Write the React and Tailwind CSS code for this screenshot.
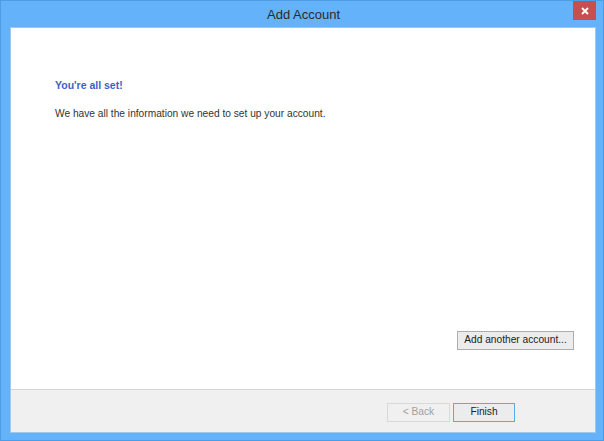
const App = () => {
    const font = { fontFamily: '"Liberation Sans", Arial, sans-serif' };
    return (
        <div className="w-[604px] h-[441px] bg-[#63b2fa] flex flex-col border border-[#4c9de6]" style={font}>
            {/* title bar */}
            <div className="h-[26px] flex items-start relative shrink-0">
                <div className="flex-1 text-center text-[13px] leading-[27px] text-[#2b2b2b] pl-[3px]">Add Account</div>
                <div className="absolute right-[7px] top-0 w-[23px] h-[19px] bg-[#c7504f] flex items-center justify-center">
                    <svg width="8" height="8" viewBox="0 0 8 8">
                        <path d="M1 1L7 7M7 1L1 7" stroke="#fff" strokeWidth="1.8" />
                    </svg>
                </div>
            </div>

            <div className="flex-1 flex flex-col ml-[9px] mr-[7px] mb-[7px] border border-[#9fc8ee]">
                <div className="flex-1 bg-white flex flex-col pl-[44px] pr-[21px]">
                    <div className="pt-[49px] text-[10.5px] font-bold text-[#3a62c9] leading-4">You're all set!</div>
                    <div className="pt-[13px] text-[10.2px] text-[#333] leading-4">We have all the information we need to set up your account.</div>
                    <div className="flex-1" />
                    <div className="flex justify-end pb-[39px]">
                        <button className="h-[19px] w-[117px] bg-[#ececec] border border-[#adadad] text-[10.2px] text-[#222] leading-none whitespace-nowrap">Add another account...</button>
                    </div>
                </div>
                <div className="h-[43px] bg-[#f0f0f0] border-t border-[#d6d6d6] flex justify-end items-start pt-[13px] pr-[80px] gap-[3px] shrink-0">
                    <button className="h-[19px] w-[63px] bg-[#f0f0f0] border border-[#d9d9d9] text-[10.2px] text-[#a0a0a0] leading-none">&lt; Back</button>
                    <button className="h-[19px] w-[62px] bg-[#ececec] border border-[#5fa8ec] text-[10.2px] text-[#222] leading-none">Finish</button>
                </div>
            </div>
        </div>
    );
};

export default App;
